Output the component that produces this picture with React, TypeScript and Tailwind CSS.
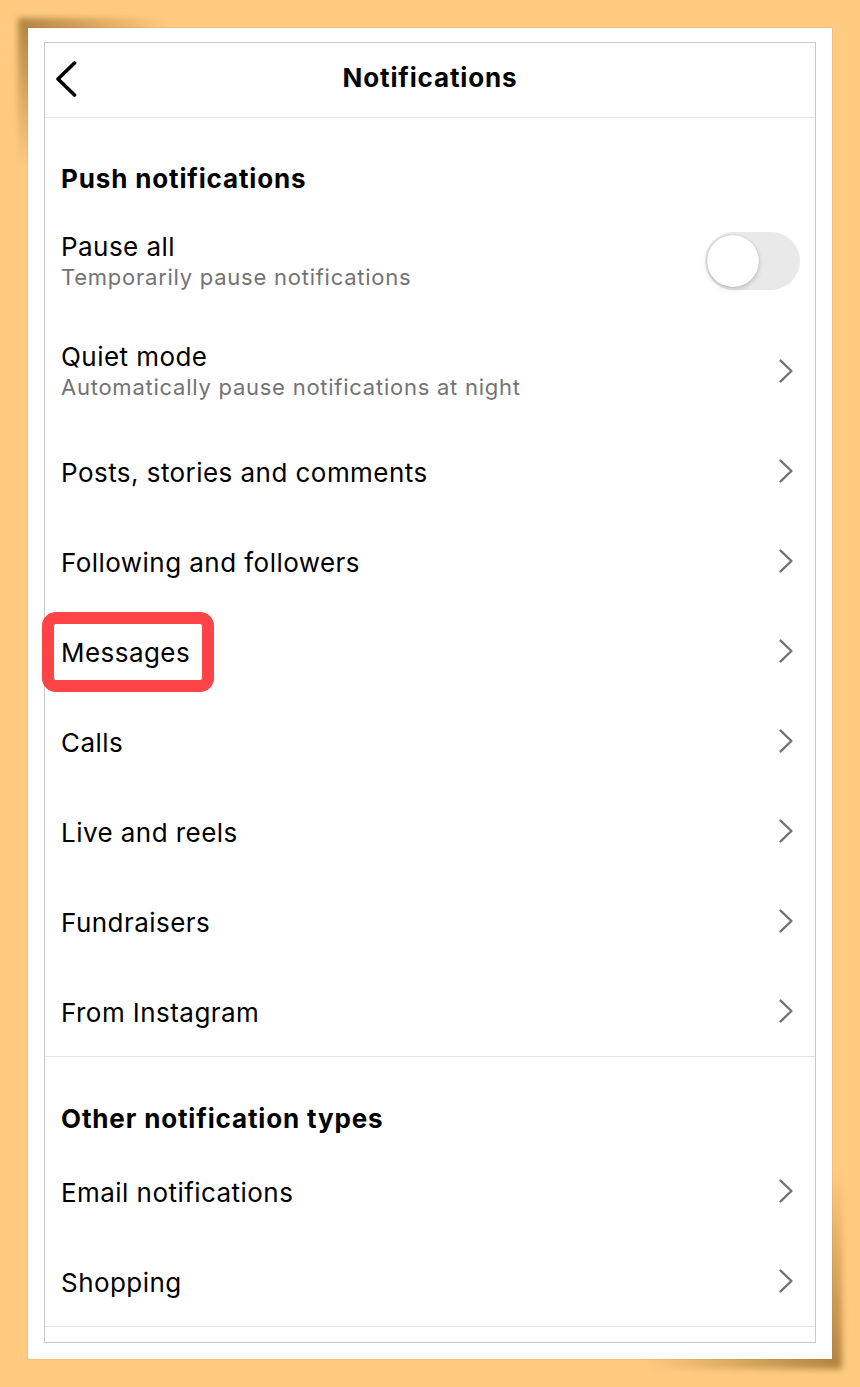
import React from "react";

const font = { fontFamily: 'Inter, "Noto Sans", "Liberation Sans", sans-serif' };

function Chevron() {
  return (
    <svg width="14" height="24" viewBox="0 0 14 24" fill="none" className="shrink-0">
      <path d="M1.6 1.6 L12.4 12 L1.6 22.4" stroke="#737373" strokeWidth="2.4" strokeLinecap="round" strokeLinejoin="round" />
    </svg>
  );
}

function Row({ title, highlight }: { title: string; highlight?: boolean }) {
  return (
    <div className="relative flex h-[90px] items-center justify-between pl-[16px] pr-[22px]">
      {highlight && (
        <div className="pointer-events-none absolute left-[-3px] top-[6px] h-[80px] w-[172px] rounded-[14px] border-[12px] border-[#ff4447]" />
      )}
      <span className="pt-[4px] text-[26px] leading-[32px] tracking-[0.45px] text-black">{title}</span>
      <Chevron />
    </div>
  );
}

function TwoLineRow({ title, sub, right }: { title: string; sub: string; right: React.ReactNode }) {
  return (
    <div className="flex h-[110px] items-center justify-between pl-[16px] pr-[22px]">
      <div className="flex flex-col">
        <span className="text-[26px] leading-[32px] tracking-[0.45px] text-black">{title}</span>
        <span className="text-[22px] leading-[28px] tracking-[0.75px] text-[#737373]">{sub}</span>
      </div>
      {right}
    </div>
  );
}

function Toggle() {
  return (
    <div className="relative mr-[-7px] h-[58px] w-[95px] rounded-full bg-[#e9e9ea]">
      <div className="absolute left-[2px] top-[3px] h-[52px] w-[52px] rounded-full bg-white shadow-[0_2px_5px_rgba(0,0,0,0.18),0_0_1px_rgba(0,0,0,0.25)]" />
    </div>
  );
}

export default function App() {
  return (
    <div className="h-[1387px] w-[860px] bg-[#ffcb80] pl-[28px] pt-[28px]" style={font}>
      <div className="relative h-[1331px] w-[804px]">
        <div className="absolute left-[-10px] top-[-10px] h-[150px] w-[150px] bg-[radial-gradient(circle_at_top_left,rgba(110,70,10,0.55),rgba(110,70,10,0)_70%)] blur-[3px]" />
        <div className="absolute bottom-[-10px] right-[-10px] h-[200px] w-[200px] bg-[radial-gradient(circle_at_bottom_right,rgba(110,70,10,0.55),rgba(110,70,10,0)_70%)] blur-[3px]" />
        <div className="relative h-full w-full bg-white px-[16px] pt-[14px] shadow-[0_0_1px_rgba(120,80,20,0.5)]">
          <div className="flex h-[1301px] flex-col border border-[#c9c9c9]">
            <div className="grid h-[75px] grid-cols-[1fr_auto_1fr] items-center border-b border-[#e3e3e3] pb-[4px]">
              <div className="pl-[10px] pt-[2px]">
                <svg width="22" height="36" viewBox="0 0 22 36" fill="none">
                  <path d="M19.5 2 L3 18 L19.5 34" stroke="#000" strokeWidth="3.6" strokeLinecap="round" strokeLinejoin="round" />
                </svg>
              </div>
              <div className="text-[26px] font-bold leading-[32px] tracking-[0.85px] text-black">Notifications</div>
              <div />
            </div>

            <div className="pb-[11px] pl-[16px] pt-[45px] text-[26px] font-bold leading-[32px] tracking-[0.85px] text-black">Push notifications</div>
            <TwoLineRow title="Pause all" sub="Temporarily pause notifications" right={<Toggle />} />
            <TwoLineRow title="Quiet mode" sub="Automatically pause notifications at night" right={<Chevron />} />
            <Row title="Posts, stories and comments" />
            <Row title="Following and followers" />
            <Row title="Messages" highlight />
            <Row title="Calls" />
            <Row title="Live and reels" />
            <Row title="Fundraisers" />
            <Row title="From Instagram" />

            <div className="border-t border-[#e3e3e3] pb-[11px] pl-[16px] pt-[46px] text-[26px] font-bold leading-[32px] tracking-[0.85px] text-black">Other notification types</div>
            <Row title="Email notifications" />
            <div className="border-b border-[#e3e3e3]">
              <Row title="Shopping" />
            </div>
          </div>
        </div>
      </div>
    </div>
  );
}
